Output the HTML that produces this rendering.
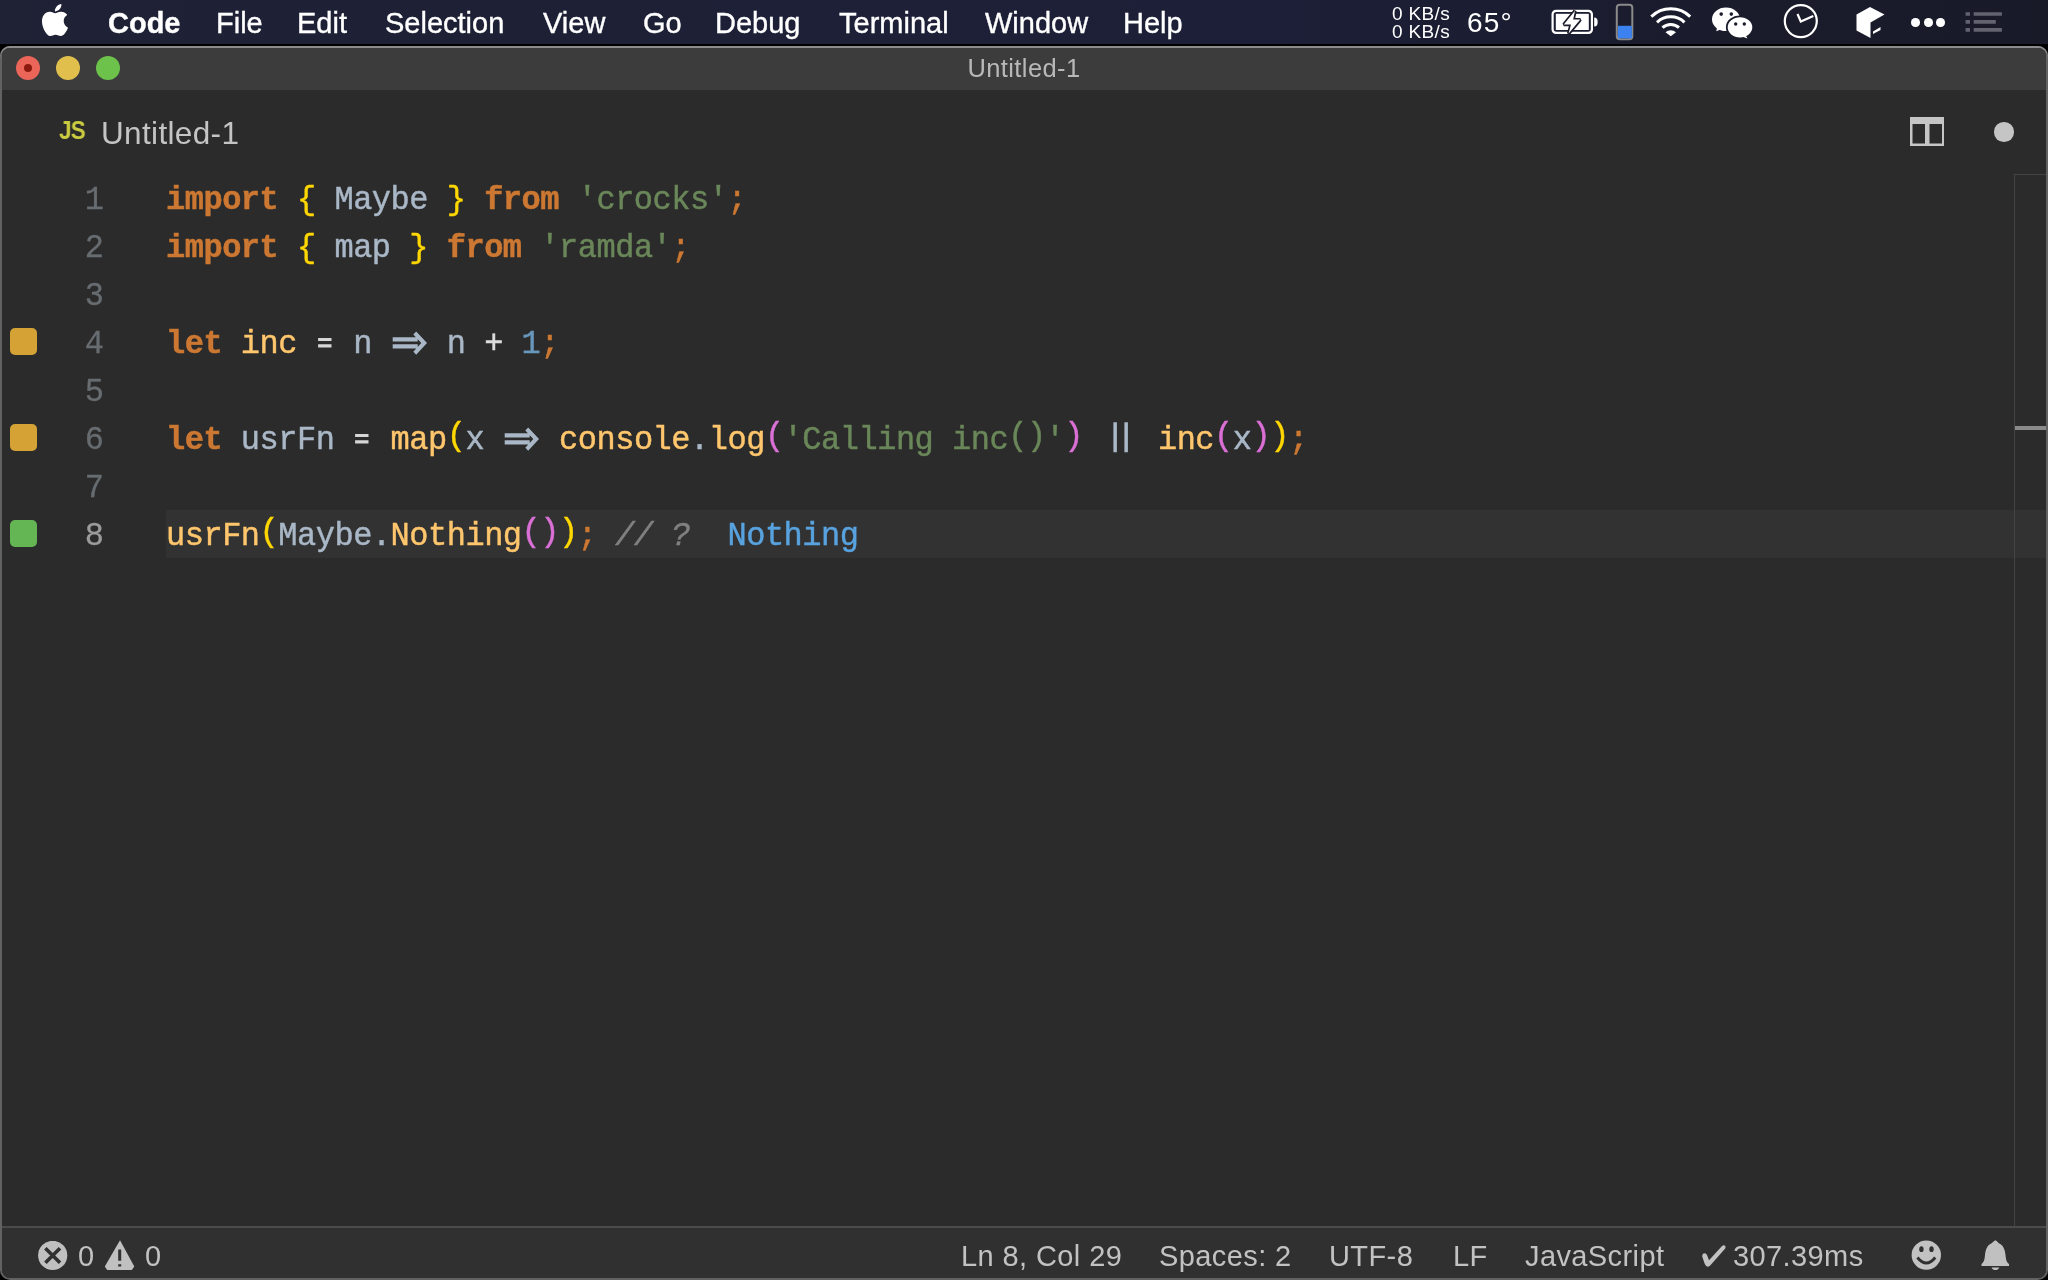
<!DOCTYPE html>
<html><head><meta charset="utf-8">
<style>
*{margin:0;padding:0;box-sizing:border-box}
html,body{width:2048px;height:1280px;overflow:hidden;background:#000}
body{position:relative;font-family:"Liberation Sans",sans-serif;-webkit-font-smoothing:antialiased}
.sb,.mi,.code,.ln,.abs{will-change:transform}
.abs{position:absolute}
#menubar{position:absolute;left:0;top:0;width:2048px;height:44px;background:linear-gradient(90deg,#1f2135 0%,#1d2036 40%,#1c1f37 62%,#1a1c2c 85%,#191a28 100%)}
.mi{position:absolute;top:0.5px;-webkit-text-stroke:0.35px #fff;height:44px;line-height:44px;font-size:29px;color:#fff;white-space:pre}
#win{position:absolute;left:0;top:46px;width:2048px;height:1234px;border-radius:10px;background:#626262;box-shadow:inset 0 2px 0 #8c8c8c;overflow:hidden}
#inner{position:absolute;left:2px;top:2px;right:2px;bottom:2px;border-radius:8px;background:#2b2b2b;overflow:hidden}
#titlebar{position:absolute;left:0;top:0;right:0;height:42px;background:#3c3c3c}
.tl{position:absolute;top:8px;width:24px;height:24px;border-radius:50%}
#editor{position:absolute;left:0;top:42px;right:0;height:1136px;background:#2b2b2b}
#status{position:absolute;left:0;top:1178px;right:0;bottom:0;background:#303030;border-top:2px solid #4b4b4b}
.code{position:absolute;margin-top:3px;left:163.5px;transform:scaleY(1.06);transform-origin:0 32.5px;-webkit-text-stroke-width:0.45px;height:48px;line-height:48px;font-family:"Liberation Mono",monospace;font-size:32px;letter-spacing:-0.49px;white-space:pre;color:#a9b7c6}
.ln{position:absolute;margin-top:3px;transform:scaleY(1.06);transform-origin:0 32.5px;-webkit-text-stroke-width:0.3px;left:40px;width:62px;text-align:right;height:48px;line-height:48px;font-family:"Liberation Mono",monospace;font-size:32px;color:#676c70}
.kw{color:#cc7832;font-weight:bold}
.br{color:#ffd700}
.id{color:#a9b7c6}
.st{color:#6a8759}
.fn{color:#ffc66d}
.pk{color:#da70d6}
.nu{color:#6897bb}
.op2{color:#dcdcdc}
.sc{color:#cc7832}
.cm{color:#808080;font-style:italic}
.bl{color:#58a3df}
.lig{position:relative}
.ligsvg{position:absolute;left:0;top:-4.5px}
.pr{position:relative;top:-4px}
.sq{position:absolute;left:8px;width:27px;height:27px;border-radius:5px}
.sb{position:absolute;top:0;height:50px;line-height:50px;font-size:29px;letter-spacing:0.4px;color:#c2c2c2;white-space:pre;margin-top:1px}
</style></head><body>
<div id="menubar">
  <div class="mi" style="left:108px;font-weight:bold">Code</div>
  <div class="mi" style="left:216px">File</div>
  <div class="mi" style="left:297px">Edit</div>
  <div class="mi" style="left:385px">Selection</div>
  <div class="mi" style="left:543px">View</div>
  <div class="mi" style="left:643px">Go</div>
  <div class="mi" style="left:715px">Debug</div>
  <div class="mi" style="left:839px">Terminal</div>
  <div class="mi" style="left:985px">Window</div>
  <div class="mi" style="left:1123px">Help</div>

  <svg class="abs" style="left:38.5px;top:4px" width="32" height="32" viewBox="0 0 24 24"><path fill="#fff" d="M12.152 6.896c-.948 0-2.415-1.078-3.96-1.04-2.040.027-3.910 1.183-4.961 3.014-2.117 3.675-.546 9.103 1.519 12.090 1.013 1.454 2.208 3.090 3.792 3.039 1.520-.065 2.090-.987 3.935-.987 1.831 0 2.350.987 3.960.948 1.637-.026 2.676-1.480 3.676-2.948 1.156-1.688 1.636-3.325 1.662-3.415-.039-.013-3.182-1.221-3.220-4.857-.026-3.040 2.480-4.494 2.597-4.559-1.429-2.090-3.623-2.324-4.390-2.376-2-.156-3.675 1.090-4.610 1.090zM15.530 3.830c.843-1.012 1.400-2.427 1.245-3.830-1.207.052-2.662.805-3.532 1.818-.780.896-1.454 2.338-1.273 3.714 1.338.104 2.715-.688 3.559-1.701"/></svg>
  <div class="abs" style="left:1392px;top:5px;font-size:19px;letter-spacing:0.35px;line-height:18px;color:#fff;white-space:pre">0 KB/s</div>
  <div class="abs" style="left:1392px;top:23px;font-size:19px;letter-spacing:0.35px;line-height:18px;color:#fff;white-space:pre">0 KB/s</div>
  <div class="abs" style="left:1466.5px;top:1px;font-size:28px;letter-spacing:1.2px;line-height:44px;color:#fff;white-space:pre">65°</div>
  <svg class="abs" style="left:1550px;top:8px" width="50" height="28" viewBox="0 0 50 28"><path fill="#fff" fill-rule="evenodd" d="M6 1.8h32.5a4.5 4.5 0 0 1 4.5 4.5v15.2a4.5 4.5 0 0 1 -4.5 4.5h-32.5a4.5 4.5 0 0 1 -4.5 -4.5v-15.2a4.5 4.5 0 0 1 4.5 -4.5zM6.5 4h31.5a2.8 2.8 0 0 1 2.8 2.8v14.2a2.8 2.8 0 0 1 -2.8 2.8h-31.5a2.8 2.8 0 0 1 -2.8 -2.8v-14.2a2.8 2.8 0 0 1 2.8 -2.8z"/><rect x="5.8" y="5.8" width="33" height="16.2" fill="#fff"/><path fill="#fff" d="M44.2 9.5a3.5 4.5 0 0 1 0 9z"/><path fill="#fff" stroke="#1b1c2b" stroke-width="3.4" stroke-linejoin="bevel" paint-order="stroke" d="M25 2.8L13.8 16.6H21L18.6 25.6L30.3 11.6H23.2z"/></svg>
  <svg class="abs" style="left:1615px;top:3px" width="20" height="38" viewBox="0 0 20 38"><rect x="1.8" y="1.8" width="15.5" height="34.5" rx="3" fill="none" stroke="#8a8a8a" stroke-width="2"/><rect x="3" y="22.8" width="13.8" height="12.5" fill="#3b82f0"/></svg>
  <svg class="abs" style="left:1648px;top:4px" width="46" height="34" viewBox="0 0 46 34"><path fill="none" stroke="#fff" stroke-width="3" stroke-linecap="butt" d="M3.3 12.6A28 28 0 0 1 42.2 12.6M9 18.3A20 20 0 0 1 36.5 18.3M14.5 23.7A12.2 12.2 0 0 1 31 23.7"/><path fill="#fff" d="M17.5 28.2A8 8 0 0 1 28 28.2L22.8 32.2z"/></svg>
  <svg class="abs" style="left:1710px;top:4px" width="45" height="36" viewBox="0 0 45 36"><ellipse cx="16" cy="15.3" rx="14" ry="11.8" fill="#fff"/><path fill="#fff" d="M7 23.5L6.3 27.2L12 25z"/><ellipse cx="30" cy="23.3" rx="13.2" ry="11" fill="#fff" stroke="#1b1c2b" stroke-width="1.8"/><path fill="#fff" d="M35.5 31L37.5 34.5L32 32.5z"/><circle cx="11.2" cy="10.1" r="1.8" fill="#1b1c2b"/><circle cx="21.3" cy="10.1" r="1.8" fill="#1b1c2b"/><circle cx="25.7" cy="20" r="1.7" fill="#1b1c2b"/><circle cx="34.3" cy="20" r="1.7" fill="#1b1c2b"/></svg>
  <svg class="abs" style="left:1782px;top:3px" width="38" height="38" viewBox="0 0 38 38"><circle cx="18.8" cy="18.1" r="16" fill="none" stroke="#fff" stroke-width="2.2"/><path fill="none" stroke="#fff" stroke-width="2.2" d="M15.5 11L18.8 18.5L31.3 13"/></svg>
  <svg class="abs" style="left:1855px;top:5.5px" width="32" height="34" viewBox="0 0 32 34"><path fill="#fff" d="M1.5 8.5L15 1L29.5 8.5L15.5 16.5V32L1.5 24.5z"/><path fill="#fff" d="M18 25.5L25.5 21V24L18 28z"/></svg>
  <div class="abs" style="left:1911.3px;top:17.6px;width:8.6px;height:8.6px;border-radius:50%;background:#fff"></div>
  <div class="abs" style="left:1923.5px;top:17.6px;width:8.6px;height:8.6px;border-radius:50%;background:#fff"></div>
  <div class="abs" style="left:1935.5px;top:17.6px;width:8.6px;height:8.6px;border-radius:50%;background:#fff"></div>
  <svg class="abs" style="left:1965px;top:11px" width="40" height="23" viewBox="0 0 40 23"><path fill="#62636f" d="M0.6 1.2h4.4v3.5h-4.4zM0.6 9h4.4v3.8h-4.4zM0.6 17h4.4v3.7h-4.4zM8.7 1.2h28.2v3.5h-28.2zM8.7 9h22.1v3.8h-22.1zM8.7 17h28.2v3.7h-28.2z"/></svg>
</div>
<div id="win"><div id="inner">
  <div id="titlebar">
    <div class="tl" style="left:14px;background:#ec6559"><div style="position:absolute;left:8px;top:8px;width:8px;height:8px;border-radius:50%;background:#8d1a0f"></div></div>
    <div class="tl" style="left:54px;background:#e0bf4c"></div>
    <div class="tl" style="left:94px;background:#6cc24b"></div>
    <div class="abs" style="left:0;right:0;top:0;height:42px;line-height:42px;margin-top:-1.5px;text-align:center;font-size:25.5px;letter-spacing:0.4px;color:#b8b8b8">Untitled-1</div>
  </div>
  <div id="editor">
  <div class="abs" style="left:0;right:0;top:0;height:84px;background:#2b2b2b"></div>
  <div class="abs" style="left:164px;right:0;top:420px;height:48px;background:#323232"></div>
  <div class="ln" style="top:84px">1</div>
  <div class="ln" style="top:132px">2</div>
  <div class="ln" style="top:180px">3</div>
  <div class="ln" style="top:228px">4</div>
  <div class="ln" style="top:276px">5</div>
  <div class="ln" style="top:324px">6</div>
  <div class="ln" style="top:372px">7</div>
  <div class="ln" style="top:420px;color:#9c9c9c">8</div>
  <div class="sq" style="top:238px;background:#d4a235"></div>
  <div class="sq" style="top:334px;background:#d4a235"></div>
  <div class="sq" style="top:430px;background:#63b653"></div>
  <div class="code" style="top:84px"><span class="kw">import</span> <span class="br">{</span> Maybe <span class="br">}</span> <span class="kw">from</span> <span class="st">'crocks'</span><span class="sc">;</span></div>
  <div class="code" style="top:132px"><span class="kw">import</span> <span class="br">{</span> map <span class="br">}</span> <span class="kw">from</span> <span class="st">'ramda'</span><span class="sc">;</span></div>
  <div class="code" style="top:228px"><span class="kw">let</span> <span class="fn">inc</span> <span class="lig"> <svg class="ligsvg" width="20" height="48" viewBox="0 0 20 48"><path fill="#d6d6d6" d="M2.1 16.8h13.4v3h-13.4zM2.1 22.8h13.4v3.1h-13.4z"/></svg></span> n <span class="lig">  <svg class="ligsvg" width="38" height="48" viewBox="0 0 38 48"><path fill="#a9b7c6" d="M1.7 16.1h25v4h-25zM1.7 22.7h25v4h-25zM22.3 13.6L25.2 10.8L36 21.7L25.2 32.6L22.3 29.8L30.3 21.7z"/></svg></span> n <span class="op2">+</span> <span class="nu">1</span><span class="sc">;</span></div>
  <div class="code" style="top:324px"><span class="kw">let</span> usrFn <span class="lig"> <svg class="ligsvg" width="20" height="48" viewBox="0 0 20 48"><path fill="#d6d6d6" d="M2.1 16.8h13.4v3h-13.4zM2.1 22.8h13.4v3.1h-13.4z"/></svg></span> <span class="fn">map</span><span class="br pr">(</span>x <span class="lig">  <svg class="ligsvg" width="38" height="48" viewBox="0 0 38 48"><path fill="#a9b7c6" d="M1.7 16.1h25v4h-25zM1.7 22.7h25v4h-25zM22.3 13.6L25.2 10.8L36 21.7L25.2 32.6L22.3 29.8L30.3 21.7z"/></svg></span> <span class="fn">console</span><span class="op">.</span><span class="fn">log</span><span class="pk pr">(</span><span class="st">'Calling inc<span class="pr">()</span>'</span><span class="pk pr">)</span> <span class="lig">  <svg class="ligsvg" width="38" height="48" viewBox="0 0 38 48"><path fill="#a9b7c6" d="M11.4 5.8h3.5v28.2h-3.5zM22.4 5.8h3.5v28.2h-3.5z"/></svg></span> <span class="fn">inc</span><span class="pk pr">(</span>x<span class="pk pr">)</span><span class="br pr">)</span><span class="sc">;</span></div>
  <div class="code" style="top:420px"><span class="fn">usrFn</span><span class="br pr">(</span>Maybe<span class="op">.</span><span class="fn">Nothing</span><span class="pk pr">()</span><span class="br pr">)</span><span class="sc">;</span> <span class="cm">// ?</span>  <span class="bl">Nothing</span></div>
  </div>
  <div id="status">
  </div>
</div></div>

<!-- tab row -->
<div class="abs" style="left:59px;top:112px;font-size:25px;font-weight:bold;color:#cbcb41;line-height:36px;letter-spacing:-0.8px;transform:scaleX(0.9);transform-origin:0 0">JS</div>
<div class="abs" style="left:101px;top:111px;font-size:31.5px;letter-spacing:0.35px;color:#c4c4c4;line-height:44px;white-space:pre">Untitled-1</div>
<svg class="abs" style="left:1909px;top:116px" width="36" height="31" viewBox="0 0 36 31"><path fill="#c5c5c5" fill-rule="evenodd" d="M1 1h34v29h-34zM3.5 8v19.5h12.5v-19.5zM20.5 8v19.5h12.5v-19.5z"/></svg>
<div class="abs" style="left:1993.5px;top:121.5px;width:19.5px;height:19.5px;border-radius:50%;background:#c5c5c5"></div>
<!-- overview ruler -->
<div class="abs" style="left:2014px;top:174px;width:1px;height:1053px;background:#444"></div>
<div class="abs" style="left:2014px;top:174px;width:32px;height:1px;background:#444"></div>
<div class="abs" style="left:2015px;top:426px;width:31px;height:4px;background:#8a8a8a"></div>
<!-- status bar -->
<svg class="abs" style="left:38px;top:1241px" width="30" height="30" viewBox="0 0 30 30"><circle cx="14.7" cy="14.4" r="14.6" fill="#c0c0c0"/><path d="M7.4 7.2L22 21.8M22 7.2L7.4 21.8" stroke="#303030" stroke-width="3.6"/></svg>
<div class="sb" style="left:77.5px;top:1230px">0</div>
<svg class="abs" style="left:104px;top:1239px" width="32" height="33" viewBox="0 0 32 33"><path fill="#c0c0c0" d="M16 1.3L30.3 27.5L27.8 31H3.2L0.8 27.5z"/><path fill="#303030" d="M14.2 10.5h3v11.3h-3zM14.2 25.2h3v2.4h-3z"/></svg>
<div class="sb" style="left:145px;top:1230px">0</div>
<div class="sb" style="left:961px;top:1230px">Ln 8, Col 29</div>
<div class="sb" style="left:1159px;top:1230px">Spaces: 2</div>
<div class="sb" style="left:1329px;top:1230px">UTF-8</div>
<div class="sb" style="left:1453px;top:1230px">LF</div>
<div class="sb" style="left:1525px;top:1230px">JavaScript</div>
<svg class="abs" style="left:1701px;top:1244px" width="26" height="25" viewBox="0 0 26 25"><path fill="#c2c2c2" d="M1.2 12.5Q1.3 8.6 4.6 9.4Q5.6 9.8 6.2 11.4L8 16.2L20.8 2.2Q22.8 0.6 24.1 1.8Q25 3 24.2 4.4L9.2 21.6Q7.2 23.6 5.2 22Q4.4 21.2 3.6 19.4Z"/></svg>
<div class="sb" style="left:1733px;top:1230px">307.39ms</div>
<svg class="abs" style="left:1911px;top:1240px" width="31" height="31" viewBox="0 0 31 31"><circle cx="15.3" cy="15.1" r="14.7" fill="#c2c2c2"/><ellipse cx="10.4" cy="9.2" rx="2.2" ry="2.9" fill="#303030"/><ellipse cx="20.5" cy="9.2" rx="2.2" ry="2.9" fill="#303030"/><path d="M6.4 17.5Q15.3 28.5 24.3 17.5" fill="none" stroke="#303030" stroke-width="2.8"/></svg>
<svg class="abs" style="left:1981px;top:1240px" width="29" height="31" viewBox="0 0 29 31"><path fill="#c0c0c0" d="M14.4 0.3C12.5 1.5 12 2 11 3C6 5 4.5 10 4 15C3.5 20 3 22 0.5 24V26H28V24C25.5 22 25 20 24.5 15C24 10 22.5 5 17.5 3C16.8 2 16.3 1.5 14.4 0.3zM10.5 27.5H18.3C17.5 29.5 16 30 14.4 30C12.8 30 11.3 29.5 10.5 27.5z"/></svg>
</body></html>
